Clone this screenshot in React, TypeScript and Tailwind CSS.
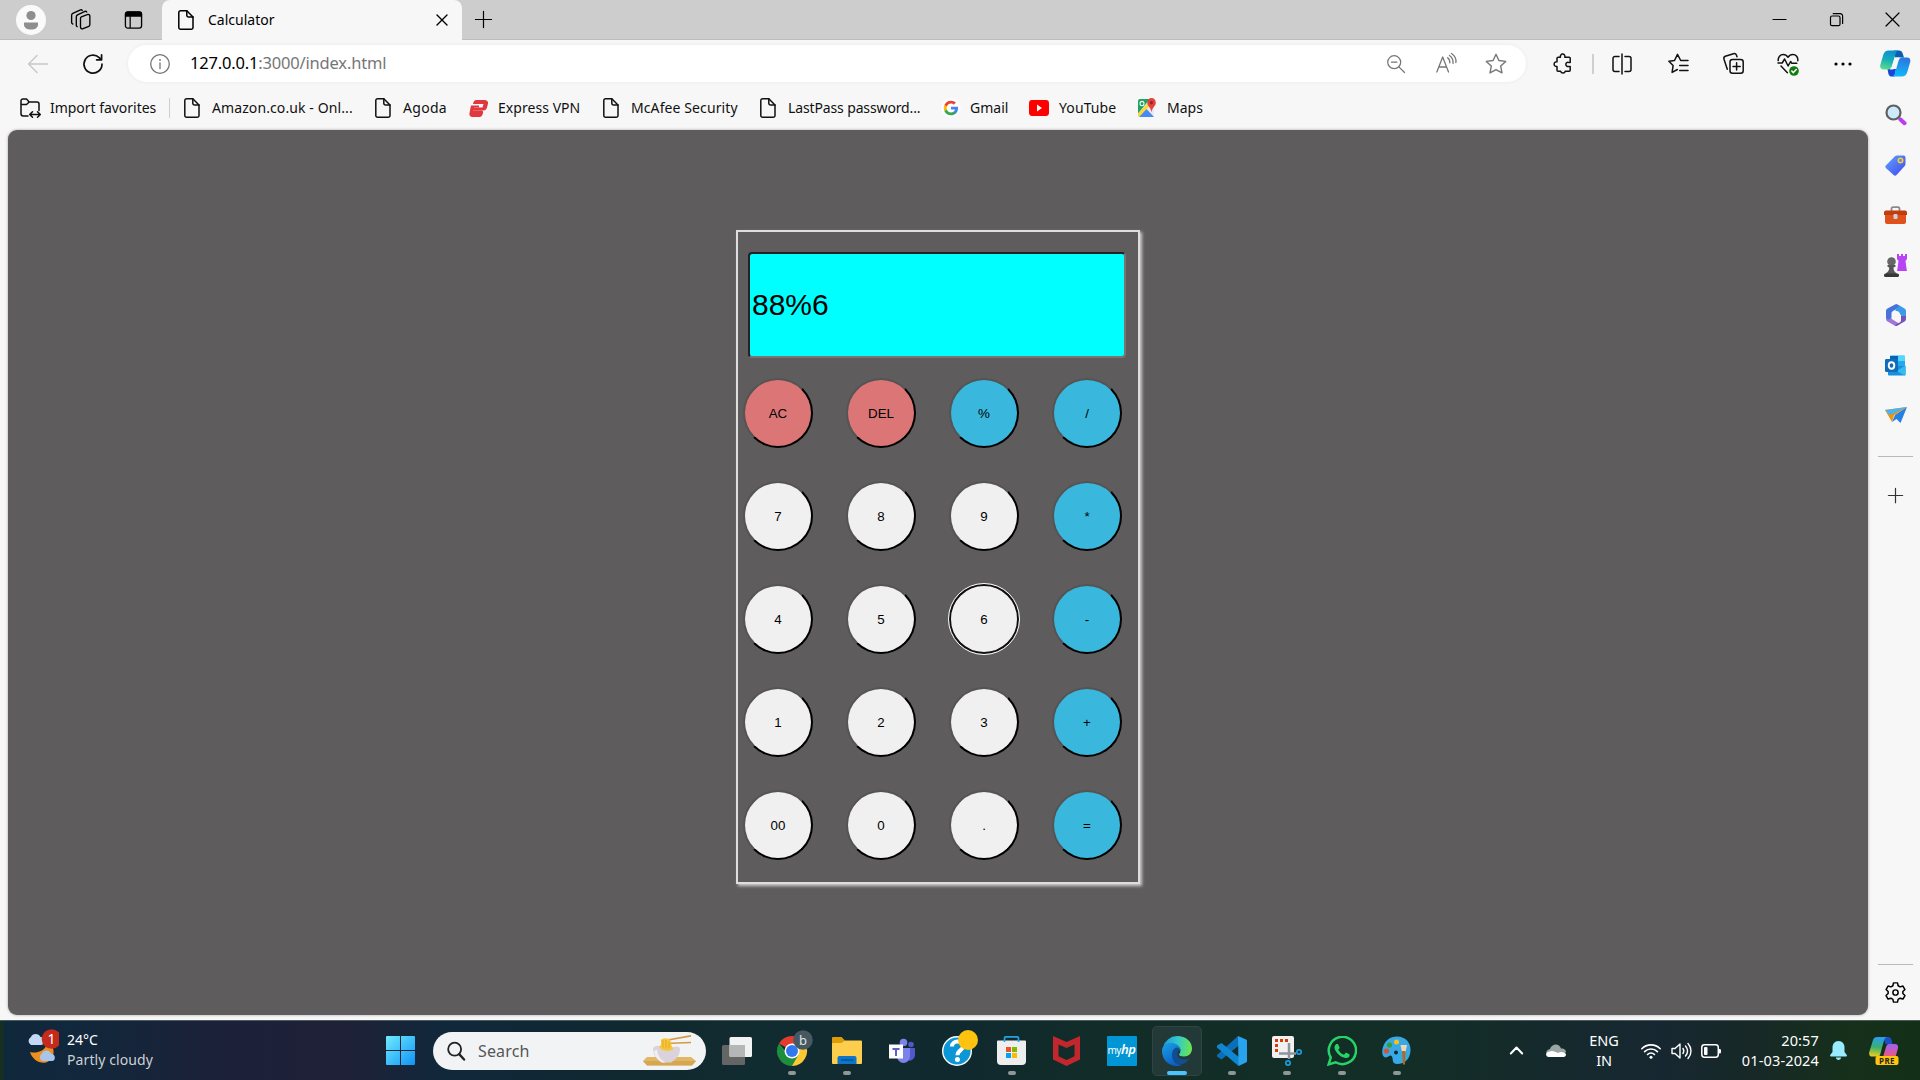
import React from "react";

const UI = "font-['Noto_Sans',sans-serif]";

type P = { children?: React.ReactNode; className?: string };

function Ico({ s = 20, vb = "0 0 20 20", w = 1.2, className = "", children }: { s?: number; vb?: string; w?: number } & P) {
  return (
    <svg width={s} height={s} viewBox={vb} fill="none" stroke="currentColor" strokeWidth={w} strokeLinecap="round" strokeLinejoin="round" className={"block shrink-0 overflow-visible " + className}>
      {children}
    </svg>
  );
}

const Doc = () => (
  <Ico s={20} w={1.5}>
    <path d="M4.6.8h6.2L17 7v10.400a1.800 1.800 0 0 1-1.800 1.800H4.600a1.800 1.800 0 0 1-1.800-1.800V2.600A1.800 1.800 0 0 1 4.600.8z" />
    <path d="M10.800.8v4.500A1.700 1.700 0 0 0 12.500 7H17" />
  </Ico>
);

const Plus = ({ s = 18, w = 1.4 }: { s?: number; w?: number }) => (
  <Ico s={s} w={w}><path d="M10 0.500v19M.5 10h19" /></Ico>
);

function Slot({ w, children }: { w: string; children?: React.ReactNode }) {
  return <div className={"flex h-full shrink-0 items-center justify-center " + w}>{children}</div>;
}

function TitleBar() {
  return (
    <div className="flex h-10 shrink-0 items-stretch border-b border-[#bdbdbd] bg-[#cdcdcd] text-black">
      <Slot w="w-[62px]">
        <svg width="30" height="30" viewBox="0 0 30 30">
          <circle cx="15" cy="15" r="15" fill="#fafafa" />
          <circle cx="15" cy="10.500" r="4.600" fill="#8e8e8e" />
          <path d="M8 17.600h14v1.800c0 3.400-3 5.100-7 5.100s-7-1.700-7-5.100z" fill="#8e8e8e" />
        </svg>
      </Slot>
      <Slot w="w-[36px]">
        <Ico s={21} w={1.400} vb="0 0 22 22">
          <path d="m12 8.200 6-2.300a1.800 1.800 0 0 1 2.800 1.500v9.100c0 .8-.4 1.300-1.100 1.600l-6 2.500a1.900 1.900 0 0 1-2.700-1.600V9.800c0-.8.300-1.300 1-1.600z" />
          <path d="M7.500 18.500c-.7-.3-.9-.8-.9-1.500V8.300c0-1 .4-1.700 1.300-2.200l7.700-3.600c.8-.3 1.600 0 1.900.7" />
          <path d="M3 15.800c-.8-.3-1.300-.8-1.300-1.700V6.500c0-.9.400-1.500 1.200-1.900L11 .9c.8-.3 1.500 0 1.900.7" />
        </Ico>
      </Slot>
      <Slot w="w-[70px]">
        <svg width="19" height="20" viewBox="0 0 20 20"><rect x="1.500" y="1.500" width="17" height="17" rx="2.500" fill="none" stroke="#000" strokeWidth="1.400" /><path d="M1 6.500V3.500A2.500 2.500 0 0 1 3.500 1h13A2.500 2.500 0 0 1 19 3.500v3z" /><path d="M6.500 6v12.500" stroke="#000" strokeWidth="1.300" /></svg>
      </Slot>
      <div className="-mb-px ml-[-6px] flex w-[300px] items-center rounded-t-[8px] bg-[#f7f7f7] pl-[14px]">
        <Doc />
        <span className="ml-[12px] w-[229px] text-[14px] leading-5">Calculator</span>
        <Ico s={10} vb="0 0 10 10" w={1.400}><path d="M0 0l10 10M10 0 0 10" /></Ico>
      </div>
      <Slot w="w-[43px]"><Plus s={17} /></Slot>
      <div className="grow" />
      <Slot w="w-[57px]"><Ico s={13} vb="0 0 13 13"><path d="M0 6.500h13" /></Ico></Slot>
      <Slot w="w-[57px]"><Ico s={13} vb="0 0 13 13"><rect x=".5" y="3" width="9.500" height="9.700" rx="1.500" /><path d="M3.200.6H10A2.500 2.500 0 0 1 12.600 3v7.400" /></Ico></Slot>
      <Slot w="w-[55px]"><Ico s={13} vb="0 0 13 13" w={1.200}><path d="M0 0l13 13M13 0 0 13" /></Ico></Slot>
    </div>
  );
}

function Toolbar() {
  return (
    <div className="flex h-[47px] shrink-0 items-center text-[#111]">
      <Slot w="w-[76px]"><Ico s={20} className="text-[#c8c8c8]" w={1.400}><path d="M19.500 10H.8M9 1.500.6 10 9 18.500" /></Ico></Slot>
      <Slot w="w-[34px]"><Ico s={20} w={1.700}><path d="M19 10.200A9 9 0 1 1 16.200 3.600L18.300 5.600M18.600.8v5h-5" /></Ico></Slot>
      <div className="ml-[18px] flex h-[37px] w-[1398px] shrink-0 items-center rounded-full bg-white pl-[22px] text-[#767676] shadow-[0_0_4px_rgba(0,0,0,0.06)]">
        <Ico s={20} w={1.300}><circle cx="10" cy="10" r="9.300" /><path d="M10 9v5.500" /><path d="M10 5.900v.1" strokeWidth="1.800" /></Ico>
        <span className="-mt-px ml-[20px] grow text-[16.500px] leading-6 tracking-[-0.18px]"><span className="text-black">127.0.0.1</span>:3000/index.html</span>
        <Slot w="w-[50px]"><Ico s={18} w={1.400}><circle cx="8" cy="8" r="7.200" /><path d="m13.200 13.200 6.300 6.300M5 8h6" /></Ico></Slot>
        <Slot w="w-[50px]"><Ico s={20} w={1.300}><path d="M.8 18 6.700 3 12.500 18M2.800 13h7.800M11.600 3.800c1.700 1.200 2.400 3 2.200 5M13.500 1.500c2.800 2 3.900 4.600 3.500 7.800M15.500-.5c3.400 2.200 4.900 5.300 4.400 9" /></Ico></Slot>
        <Slot w="w-[50px]"><Ico s={22} w={1.400} vb="0 0 22 22"><path d="m11 1.300 2.900 6.200 6.800.9-5 4.700 1.300 6.800-6-3.300-6 3.300 1.300-6.800-5-4.700 6.800-.9z" /></Ico></Slot>
        <div className="w-[5px] shrink-0" />
      </div>
      <div className="w-[11px] shrink-0" />
      <Slot w="w-[50px]"><Ico s={20} w={1.500}><path d="M6.200 3.200h2.300a2.300 2.300 0 1 1 4.300 0h4.400c.6 0 1 .4 1 1v4.200h-1.600a2.100 2.100 0 1 0 0 4h1.600v3.800c0 .6-.4 1-1 1h-3.900a2.400 2.400 0 0 1-4.700 0H6a1 1 0 0 1-1-1v-3.700a2.400 2.400 0 1 1 0-4.700V4.200c0-.6.400-1 1.200-1z" /></Ico></Slot>
      <div className="ml-[5px] h-[20px] w-[2px] shrink-0 bg-[#cfcfcf]" />
      <Slot w="w-[56px]"><Ico s={20} w={1.500}><path d="M10 0v20M7 2.500H3a2 2 0 0 0-2 2v11a2 2 0 0 0 2 2h4M13 2.500h4a2 2 0 0 1 2 2v11a2 2 0 0 1-2 2h-4" /></Ico></Slot>
      <Slot w="w-[56px]"><Ico s={21} w={1.500} vb="0 0 21 21"><path d="M12.700 7.500 9.500 1.400 6.500 7.500.9 8.300l4.200 4.300-1 6.800 5.300-2.900M12.700 7.500H20M11.700 12.500H20M11.700 17.500H20" /></Ico></Slot>
      <Slot w="w-[54px]"><Ico s={21} w={1.500} vb="0 0 21 21"><rect x="7" y="6.500" width="13.200" height="13.700" rx="2.500" /><path d="M13.600 9.700v7.300M10 13.400h7.200M4.300 16.200 1 6.200C.6 4.800 1 3.800 2.300 3.300L10.500.7c1.400-.4 2.400.1 2.900 1.300l.6 1.700" /></Ico></Slot>
      <Slot w="w-[55px]"><Ico s={22} w={1.500} vb="0 0 22 22"><path d="M1.200 7.600C1 4 3.300 1.500 6.200 1.500c2 0 3.600 1 4.800 2.800 1.200-1.800 2.800-2.800 4.800-2.800 3.200 0 5.400 2.600 5 6.200M1 10h4.200L7.600 6l3.500 7 2.500-4.500 1 1.700h5.200M4 13l6.400 6.700" /><circle cx="17" cy="18" r="4.800" fill="#107c10" stroke="none" /><path d="m14.800 18 1.600 1.600 2.900-3" stroke="#fff" /></Ico></Slot>
      <Slot w="w-[56px]"><svg width="18" height="4" viewBox="0 0 18 4"><circle cx="2" cy="2" r="1.600" /><circle cx="9" cy="2" r="1.600" /><circle cx="16" cy="2" r="1.600" /></svg></Slot>
      <Slot w="w-[49px]">
        <svg width="31" height="27" viewBox="0 0 31 27">
          <defs>
            <linearGradient id="cp1" x1=".5" y1="0" x2=".3" y2="1"><stop stopColor="#0c8fd2" /><stop offset=".5" stopColor="#17b0b8" /><stop offset="1" stopColor="#5ddc8c" /></linearGradient>
            <linearGradient id="cp2" x1=".6" y1="0" x2=".4" y2="1"><stop stopColor="#2c76dd" /><stop offset="1" stopColor="#10b9fb" /></linearGradient>
          </defs>
          <path d="M14 .5h5c2 0 3 .8 3.600 2.800L24 7.500h-9z" fill="#0b5fae" />
          <path d="M7.500 19H16l-1.500 7.500H12c-2 0-3-.8-3.600-2.800z" fill="#1746d8" />
          <path d="M9 .5h10c-1.700 0-2.700 1-3.300 3L12 16c-.7 2.300-1.700 3.500-4 3.500H3.500C.8 19.500-.4 17.500.3 15l2.900-10C4.200 1.800 6 .5 9 .5z" fill="url(#cp1)" />
          <path d="M21.500 26.500h-10c1.700 0 2.700-1 3.300-3L18.500 11c.7-2.300 1.700-3.500 4-3.500H27c2.700 0 3.900 2 3.200 4.500l-2.900 10c-1 3.200-2.800 4.500-5.800 4.500z" fill="url(#cp2)" />
          <path d="M14.800 7.500h5c-1.500.8-2.300 2-2.800 3.600l-1.900 6.500c-.4 1.200-1.200 1.900-2.700 1.900H9.500c1.300-.6 2.100-1.800 2.500-3.200z" fill="#f7f7f7" />
        </svg>
      </Slot>
    </div>
  );
}

const G = () => (
  <svg width="20" height="20" viewBox="-3 -3 30 30"><circle cx="12" cy="12" r="14.500" fill="#fff" />
    <path fill="#4285F4" d="M22.560 12.250c0-.78-.07-1.530-.2-2.250H12v4.260h5.920c-.26 1.370-1.040 2.530-2.210 3.310v2.770h3.570c2.080-1.920 3.280-4.740 3.280-8.090z" />
    <path fill="#34A853" d="M12 23c2.970 0 5.460-.98 7.280-2.660l-3.570-2.770c-.98.66-2.230 1.060-3.710 1.060-2.860 0-5.290-1.930-6.160-4.530H2.180v2.840C3.990 20.530 7.700 23 12 23z" />
    <path fill="#FBBC05" d="M5.840 14.090A6.600 6.600 0 0 1 5.490 12c0-.73.13-1.430.35-2.090V7.070H2.180a11 11 0 0 0 0 9.860z" />
    <path fill="#EA4335" d="M12 5.380c1.620 0 3.060.56 4.210 1.640l3.150-3.150C17.450 2.090 14.970 1 12 1 7.700 1 3.990 3.470 2.180 7.070l3.660 2.840C6.710 7.310 9.140 5.380 12 5.380z" />
  </svg>
);

function Fav({ w, icon, children, className = "" }: { w: string; icon: React.ReactNode } & P) {
  return (
    <div className={"flex h-full shrink-0 items-center gap-[10px] " + w}>
      <div className="flex w-5 shrink-0 justify-center">{icon}</div>
      <span className={"whitespace-nowrap text-[14px] leading-5 " + className}>{children}</span>
    </div>
  );
}

function Favorites() {
  return (
    <div className="flex h-[43px] shrink-0 items-center pb-px pl-5 text-[#111]">
      <Fav w="w-[149px]" className="tracking-[-0.03px]" icon={<Ico s={20} w={1.500}><path d="M8 18H3.200A2.200 2.200 0 0 1 1 15.800V2.900A1.900 1.900 0 0 1 2.900 1H6.500l2.700 3H17a2 2 0 0 1 2 2v6.500M1 6.500h5.500L9.200 4M10.200 16.500H20M12.500 13.700l-2.800 2.800 2.800 2.800M17.500 13.700l2.800 2.800-2.800 2.800" /></Ico>}>Import favorites</Fav>
      <div className="h-5 w-px shrink-0 bg-[#cfcfcf]" />
      <div className="w-3 shrink-0" />
      <Fav w="w-[191px]" icon={<Doc />} className="tracking-[0.1px]">Amazon.co.uk - Onl...</Fav>
      <Fav w="w-[95px]" icon={<Doc />} className="tracking-[0.3px]">Agoda</Fav>
      <Fav w="w-[133px]" className="tracking-[0.05px]" icon={<svg width="19" height="17" viewBox="0 0 19 17"><path d="M7.500 0h8c2.800 0 4 1.800 3.400 4l-.9 3.500c-.6 2-1.500 3-3.500 3H4.500C3 10.500 2.400 9.600 2.700 8.500L3 7.500h10.500l1-3.500H4C4.500 1.500 5.500 0 7.500 0z" fill="#e0383e" /><path d="M2 5.500h8v2H5L4 10.500h8c1.500 0 2.500.8 2 2.500-.6 2.500-1.700 4-3.500 4h-7C1 17 0 15.200.5 13z" fill="#e0383e" /></svg>}>Express VPN</Fav>
      <Fav w="w-[157px]" icon={<Doc />} className="tracking-[0.1px]">McAfee Security</Fav>
      <Fav w="w-[183px]" icon={<Doc />} className="tracking-[-0.13px]">LastPass password...</Fav>
      <Fav w="w-[88px]" icon={<G />} className="-ml-px">Gmail</Fav>
      <Fav w="w-[108px]" className="tracking-[0.1px]" icon={<svg width="20" height="16" viewBox="0 0 20 14" preserveAspectRatio="none"><rect width="20" height="14" rx="3" fill="#f00" /><path d="M8 4v6l5-3z" fill="#fff" /></svg>}>YouTube</Fav>
      <Fav w="w-[80px]" icon={
        <svg width="18" height="20" viewBox="0 0 18 18" preserveAspectRatio="none"><rect y="1" width="16" height="16" rx="2" fill="#e8eaed" /><path d="M2 1h10L0 14V3a2 2 0 0 1 2-2z" fill="#1ea362" /><path d="M8 9.500 16 17H1z" fill="#4a89f3" /><path d="M14 1 0 14v2l1 1L16 3z" fill="#fdd835" /><circle cx="4" cy="5" r="2" fill="none" stroke="#fff" /><path d="M13.500 0A4.200 4.200 0 0 0 9.300 4.200C9.300 7.500 13 8 13.500 13c.5-5 4.300-5.500 4.300-8.800A4.200 4.200 0 0 0 13.500 0z" fill="#e5433a" /><circle cx="13.500" cy="4.300" r="1.600" fill="#8a2b23" /></svg>
      }>Maps</Fav>
    </div>
  );
}

const keys = ["AC", "DEL", "%", "/", "7", "8", "9", "*", "4", "5", "6", "-", "1", "2", "3", "+", "00", "0", ".", "="];

function keyColor(k: string, i: number) {
  if (k === "AC" || k === "DEL") return "bg-[#dc7676] ";
  return i % 4 === 3 || k === "%" ? "bg-[#39b7dc] " : "bg-[#f0f0f0] ";
}

function Calculator() {
  return (
    <div className="flex h-[654px] w-[404px] flex-col border-2 border-[#dedede] pt-5 font-['Liberation_Sans',Arial,sans-serif] text-black shadow-[2px_2px_3px_#ffffffb0]">
      <div className="ml-[10px] flex h-[106px] w-[378px] shrink-0 items-center rounded-[4px] border-2 border-b-[#767676] border-l-[#222] border-r-[#767676] border-t-[#222] bg-[#00ffff] pb-[2px] pl-[2px] text-[30px]">88%6</div>
      <div className="ml-[5px] mt-5 grid grid-cols-[repeat(4,70px)] gap-[33px]">
        {keys.map((k, i) => (
          <button key={k} className={"flex h-[70px] w-[70px] items-center justify-center rounded-full border-2 pt-px text-[13.330px] " + keyColor(k, i) + (k === "6" ? "border-[#101010] outline outline-[1.250px] outline-white" : "border-b-black border-l-[#555354] border-r-black border-t-[#555354]")}>{k}</button>
        ))}
      </div>
    </div>
  );
}

function SideIcons() {
  const cell = "flex h-[50px] shrink-0 items-center justify-center";
  return (
    <div className="flex w-[52px] shrink-0 flex-col items-center pl-[3px] pt-[3px] text-[#333]">
      <div className={cell}>
        <svg width="22" height="22" viewBox="0 0 22 22"><path d="m14 14 6.500 6" stroke="#666" strokeWidth="2.500" /><path d="m15.500 15.500 4 3.700" stroke="#c03af5" strokeWidth="4" strokeLinecap="round" /><circle cx="8.500" cy="8.500" r="7" fill="#cdeafb" stroke="#606060" strokeWidth="2.200" /></svg>
      </div>
      <div className={cell}>
        <svg width="21" height="21" viewBox="0 0 21 21"><defs><linearGradient id="tg" x1="0" y1="0" x2="1" y2="1"><stop stopColor="#5fa4fb" /><stop offset="1" stopColor="#4246ee" /></linearGradient></defs><path d="M12 .5h6.500A2 2 0 0 1 20.500 2.500V9a3 3 0 0 1-.8 2l-8.200 9a2 2 0 0 1-2.900 0l-7.500-6.800a2 2 0 0 1 0-2.900L9.900 1.300A3 3 0 0 1 12 .5z" fill="url(#tg)" /><circle cx="15.500" cy="5.500" r="2.200" fill="#5b85f2" stroke="#f6cf38" strokeWidth="1.600" /></svg>
      </div>
      <div className={cell}>
        <svg width="23" height="18" viewBox="0 0 23 18"><path d="M7.500 5V2.800A1.500 1.500 0 0 1 9 1.200h5a1.500 1.500 0 0 1 1.500 1.600V5" fill="none" stroke="#8a8a8a" strokeWidth="1.800" /><rect x="1" y="6" width="21" height="12" rx="2" fill="#df521c" /><path d="M2 4.500h19a2 2 0 0 1 2 2V9H0V6.500a2 2 0 0 1 2-2z" fill="#c13d0d" /><rect x="9.500" y="8" width="4" height="5" rx="1" fill="#c9d3d8" /></svg>
      </div>
      <div className={cell}>
        <svg width="23" height="23" viewBox="0 0 23 23"><path d="M13 0h2v2h2V0h2v2h2V0h2v5l-1.500 2 1 7.500.5 2.500H13l.5-2.500 1-7.500L13 5z" fill="#b944f5" /><circle cx="7.500" cy="7.500" r="4.300" fill="#666" /><path d="M3.500 11h8v1.800l-2 .7c0 3 1 4.500 3 5.500v1H2v-1c2-1 3.200-2.500 3.200-5.500l-1.700-.7z" fill="#575757" /><rect y="19.500" width="15" height="3.500" rx="1.500" fill="#383838" /></svg>
      </div>
      <div className={cell}>
        <svg width="22" height="22" viewBox="0 0 22 22"><path d="M10 .4 2.500 4.500A3 3 0 0 0 1 7.200v6.800c0 1.500 1 2.500 2.300 2.500S6.500 15 6.500 13V9.500c0-1.200.6-2 1.500-2.600L14.500 3V1.500L12.500.4a3 3 0 0 0-2.500 0z" fill="#4573db" /><path d="M1 13v1.800a3 3 0 0 0 1.500 2.700l7 4c1 .6 2 .6 3 0l2.500-1.500-7.500-4.500c-1-.6-1.300-1.200-1.500-2.500-.3 3-4.500 3.500-5 0z" fill="#a276d8" /><path d="M21 10v4.800a3 3 0 0 1-1.500 2.700l-7 4a3 3 0 0 1-3 0l5.500-3.300c.6-.4 1-1 1-2V11c2.500 1.500 4.500 1 5-1z" fill="#7650b5" /><path d="M14.500 1.500 19.500 4.500A3 3 0 0 1 21 7.200V10c0 2-2.500 2.700-4.500 1.500L10 6z" fill="#3a9aea" /><circle cx="11" cy="11" r="4" fill="#f7f7f7" /></svg>
      </div>
      <div className={cell}>
        <svg width="21" height="21" viewBox="0 0 21 21"><rect x="5" y=".5" width="15" height="13" rx="1" fill="#28a8ea" /><path d="M5 1h8v5H5z" fill="#0364b8" /><path d="M13 1h7v5h-7z" fill="#50d9ff" /><path d="M3 11h17.500v8.500a1 1 0 0 1-1 1H4a1 1 0 0 1-1-1z" fill="#1490df" /><path d="m20.500 10.500-9 5.500 8 4.500a1 1 0 0 0 1-1z" fill="#35bbef" /><rect y="4" width="13" height="13" rx="1.200" fill="#0f6cbd" /><ellipse cx="6.500" cy="10.500" rx="2.800" ry="3.300" fill="none" stroke="#fff" strokeWidth="1.900" /></svg>
      </div>
      <div className={cell}>
        <svg width="22" height="16" viewBox="0 0 22 16"><path d="M0 3 22 0 9 8.500 7 15z" fill="#f0930d" /><path d="M0 3 22 0 5 8z" fill="#47b4f5" /><path d="M22 0 15.500 16 11.500 12 7 15 10 8z" fill="#2580e5" /></svg>
      </div>
      <div className="mt-[16px] h-px w-[35px] shrink-0 bg-[#b9b9b9]" />
      <div className="mt-[31px] shrink-0"><Plus s={15} w={1.600} /></div>
      <div className="grow" />
      <div className="h-px w-[35px] shrink-0 bg-[#b9b9b9]" />
      <div className="mb-[17px] mt-[17px] shrink-0 text-black">
        <Ico s={21} w={1.700} vb="0 0 24 24"><path d="M9.700 1h4.600l.7 3.300 2.300 1.300 3.200-1 2.300 4-2.400 2.300v2.300l2.400 2.300-2.300 4-3.200-1-2.300 1.300-.7 3.200H9.700L9 19.800l-2.300-1.300-3.200 1-2.300-4 2.400-2.300v-2.300L1.200 8.600l2.300-4 3.200 1L9 4.300z" /><circle cx="12" cy="12" r="3" /></Ico>
      </div>
    </div>
  );
}

function TaskIcon({ children, dot = false, active = false }: { children: React.ReactNode; dot?: boolean; active?: boolean }) {
  return (
    <div className="flex h-full w-[55px] shrink-0 items-center justify-center">
      <div className={"relative flex h-[50px] w-[50px] items-center justify-center rounded-[5px] " + (active ? "border border-[#2f4543] bg-[#233937]" : "")}>
        {children}
        {dot && <span className="absolute bottom-[1px] left-[21px] h-1 w-2 rounded-full bg-[#8d9897]" />}
        {active && <span className="absolute bottom-0 left-[14px] h-1 w-5 rounded-full bg-[#4cc2ff]" />}
      </div>
    </div>
  );
}

function Taskbar() {
  return (
    <div className="flex h-[60px] shrink-0 items-center border-t border-[#4a5c5c] bg-[linear-gradient(90deg,#152f20_0px,#152f20_3px,#10283c_4px,#12273b_90px,#1b2139_210px,#1f2138_340px,#10283a_450px,#10282f_640px,#112c31_760px,#10292f_960px,#122d27_1130px,#132e26_1400px,#152a2c_1540px,#172731_1660px,#172827_1750px,#16301b_1850px,#142f18_1920px)] text-white">
      <div className="ml-[27px] flex w-[359px] shrink-0 items-center gap-[8px]">
        <svg width="32" height="36" viewBox="0 0 32 36" className="-mt-[10px]"><path d="M3 24c6 2 15-1 17-8 9 1 9 15-1 18.500C12 36 5 31 3 24z" fill="#ef8f1d" /><path d="M4 17a4.500 4.500 0 0 1 0-8c1-4 8-4 9.500 0C18 9 18 17 14 17z" fill="#c3d8f7" /><path d="M15 33a4.300 4.300 0 0 1 0-7.500c1-4 7.500-4 9 0 5 .5 5 7.500 1 7.500z" fill="#a9c5ee" /><circle cx="24.500" cy="11" r="9.800" fill="#c42b1c" /><text x="24.500" y="16" textAnchor="middle" fontSize="14" fill="#fff" fontFamily="Noto Sans">1</text></svg>
        <div className="-mt-[2px] text-[14px] leading-5"><div>24°C</div><div className="tracking-[0.1px] text-[#cdd0d5]">Partly cloudy</div></div>
      </div>
      <svg width="29" height="29" viewBox="0 0 29 29" className="shrink-0"><defs><linearGradient id="wn" x1="0" y1="0" x2="1" y2="1"><stop stopColor="#6febff" /><stop offset="1" stopColor="#0f93f5" /></linearGradient></defs><path d="M1 0h13v14H0V1a1 1 0 0 1 1-1zM15 0h13a1 1 0 0 1 1 1v13H15zM0 15h14v14H1a1 1 0 0 1-1-1zM15 15h14v13a1 1 0 0 1-1 1H15z" fill="url(#wn)" /></svg>
      <div className="ml-[18px] flex h-[38px] w-[273px] shrink-0 items-center rounded-full bg-[#f1f3f5] pl-[14px] pr-[10px]">
        <Ico s={18} w={2} className="text-[#222]"><circle cx="8.500" cy="8" r="7.200" /><path d="m13.500 13.500 5.500 6" strokeWidth="2.600" /></Ico>
        <span className="ml-[13px] grow text-[16px] tracking-[0.15px] text-[#565656]">Search</span>
        <svg width="53" height="31" viewBox="0 0 53 31"><path d="M4 22h44l5 4-4 4.500H4L0 26z" fill="#e0b765" /><path d="M0 26h53l-4 4.500H4z" fill="#cd9c45" opacity=".6" /><path d="M22 5.500 48 .8M22 8.500l26-1" stroke="#d39a45" strokeWidth="1.700" /><path d="M15 15c0-3 2-4 3-5V5c2-2.500 8-2 9.500.5 1 2 1 7 2.500 9.500z" fill="#f7c63b" /><path d="M20 5v10M23 5v10M26 7v7" stroke="#d89c20" strokeWidth=".7" /><path d="M10 13c2-2.500 5-3 7-1.500 3 3 10 4 13 .5 3-1 7-1 7 2 0 7-5 11-9 13.500h-9C14 25 10 20 10 13z" fill="#dbd3dc" /><path d="M11 16c1 6 4 9 8 11.500h4c-5-2-8-6-9-13z" fill="#f3eef3" /><path d="M17 11c2 4 9 5 13 2" stroke="#f7c63b" strokeWidth="2.500" fill="none" /></svg>
      </div>
      <div className="ml-[3px] flex h-full shrink-0">
        <TaskIcon><svg width="30" height="28" viewBox="0 0 30 28"><rect y="8" width="23" height="20" rx="1.500" fill="#646666" /><rect x="7.500" width="22.500" height="20" rx="1.500" fill="#f2f2f2" /><path d="M7.500 8H23v12H9a1.500 1.500 0 0 1-1.500-1.500z" fill="#b5b7b7" /></svg></TaskIcon>
        <TaskIcon dot>
          <svg width="30" height="30" viewBox="0 0 30 30" className="overflow-visible"><path d="M15 15 2 7.500A15 15 0 0 1 28 7.500H15z" fill="#e33b2e" /><path d="M15 15v15A15 15 0 0 0 28 7.500H15z" fill="#fcc934" /><path d="M2 7.500A15 15 0 0 0 15 30l6.500-11.200L15 15H8.500z" fill="#1e8e3e" /><circle cx="15" cy="15" r="7.500" fill="#fff" /><circle cx="15" cy="15" r="6" fill="#3178ee" /><circle cx="26" cy="4" r="9.800" fill="#475862" /><text x="26" y="9" textAnchor="middle" fontSize="13" fill="#dfe3e5" fontFamily="Noto Sans">b</text></svg>
        </TaskIcon>
        <TaskIcon dot><svg width="30" height="27" viewBox="0 0 30 27"><path d="M1 0h8.500l3.500 3.500V8H0V1a1 1 0 0 1 1-1z" fill="#dd9b0a" /><path d="M1 6h8.500L13 3.500h16a1 1 0 0 1 1 1V26a1 1 0 0 1-1 1H1a1 1 0 0 1-1-1V7a1 1 0 0 1 1-1z" fill="#fdce4b" /><path d="M5.500 27v-6A2 2 0 0 1 7.500 19h15a2 2 0 0 1 2 2v6z" fill="#0d76c8" /><path d="M9 23h12.500" stroke="#084f93" strokeWidth="1.500" /></svg></TaskIcon>
        <TaskIcon><svg width="26" height="26" viewBox="0 0 26 26"><circle cx="22" cy="6.500" r="2.800" fill="#5059c9" /><circle cx="14.500" cy="4.500" r="3.800" fill="#7b83eb" /><path d="M18 10h8v8a5.500 5.500 0 0 1-8 4z" fill="#5059c9" /><path d="M8 10h13v8.500A6.500 6.500 0 0 1 8 18.500z" fill="#7b83eb" /><rect y="6.500" width="14" height="14" fill="#fff" /><path d="M7 18v-7M3.500 11h7" stroke="#5a62c3" strokeWidth="2" /></svg></TaskIcon>
        <TaskIcon><svg width="30" height="30" viewBox="0 0 30 30" className="overflow-visible"><circle cx="15" cy="15" r="14.300" fill="#0c96d6" stroke="#fff" strokeWidth="1.400" /><path d="M10 10.500c0-6.500 11-6.500 11-.3 0 4.500-5.500 4-5.500 9" stroke="#fff" strokeWidth="4" fill="none" /><circle cx="15.400" cy="23.500" r="2.500" fill="#fff" /><circle cx="26" cy="4" r="10" fill="#ffc20e" /></svg></TaskIcon>
        <TaskIcon dot><svg width="29" height="29" viewBox="0 0 29 29"><path d="M1 4.500h27a1 1 0 0 1 1 1V25a4 4 0 0 1-4 4H4a4 4 0 0 1-4-4V5.500a1 1 0 0 1 1-1z" fill="#eeeeee" /><path d="M7.500 6V2a1.500 1.500 0 0 1 1.500-1.200h11A1.500 1.500 0 0 1 21.500 2v4" stroke="#1fa4e4" strokeWidth="1.700" fill="none" /><path d="M9 11h5v5H9z" fill="#f25022" /><path d="M15 11h5v5h-5z" fill="#7fba00" /><path d="M9 17h5v5H9z" fill="#00a4ef" /><path d="M15 17h5v5h-5z" fill="#ffb900" /></svg></TaskIcon>
        <TaskIcon><svg width="27" height="30" viewBox="0 0 27 30"><path fillRule="evenodd" d="m0 0 13.500 6L27 0v23.500L13.500 30 0 23.500zM5.500 8.500v11.800l8 3.700 8-3.700V8.500l-8 3.500z" fill="#c1272d" /></svg></TaskIcon>
        <TaskIcon><div className="flex h-[30px] w-[30px] items-center justify-center rounded-[1px] bg-[#0096d6] pb-[2px] text-[10px] leading-none tracking-[-0.4px]">my<b className="text-[13px] font-semibold italic">hp</b></div></TaskIcon>
        <TaskIcon active>
          <svg width="30" height="30" viewBox="0 0 30 30"><defs><linearGradient id="e1" x1="0" y1=".4" x2="1" y2=".5"><stop stopColor="#1b9de0" /><stop offset=".5" stopColor="#35c9c9" /><stop offset="1" stopColor="#6ae64c" /></linearGradient><linearGradient id="e2" x1="0" y1="0" x2=".5" y2="1"><stop stopColor="#1ba1e4" /><stop offset="1" stopColor="#0b5fc4" /></linearGradient></defs><path d="M1 11A15 15 0 0 1 15 0c9 0 15 5.500 15 12.500 0 5-3.500 8-8 8-3.500 0-5-1-5-2 0-.8 1.500-1.500 1.500-4C18.500 10.500 14 7.500 9 7.500c-4 0-7 1.500-8 3.500z" fill="url(#e1)" /><path d="M0 15C0 9.500 4.500 7 9 7c5.500 0 9.500 3.500 9.500 7.500-3-2.500-7.500 0-7.500 5 0 5 4 9.500 8.500 9.500-1.500.7-3 1-4.500 1C6.500 30 0 23.500 0 15z" fill="url(#e2)" /><path d="M15 11.500c-3 .5-5 3.500-5 7.500 0 6 4 10 9 10 4.500-1.500 8-5 8.500-6.500-3 1.700-12 1.500-12-4.500 0-2 .8-3 1.500-3.500 1 0 1.500-2-2-3z" fill="#114d8f" /></svg>
        </TaskIcon>
        <TaskIcon dot><svg width="30" height="30" viewBox="0 0 30 30"><path d="M21 0 23 8.500 4.500 23.500 0 20.500V19z" fill="#0b6fb8" /><path d="m4.500 7 18.500 15L21.500 30 0 11.500V9.500z" fill="#1186d0" /><path d="m21 0 8 3.500A1.500 1.500 0 0 1 30 5v20a1.500 1.500 0 0 1-1 1.500L21.500 30z" fill="#2aa3ee" /></svg></TaskIcon>
        <TaskIcon dot><svg width="30" height="30" viewBox="0 0 30 30" className="overflow-visible"><rect width="22" height="22" rx="2" fill="#f2f0f0" /><path d="M4.500 16V4.500H17" stroke="#d83b01" strokeWidth="3" strokeDasharray="3 2" fill="none" /><path d="M17 7v16M7 17.500h17" stroke="#8d969c" strokeWidth="2.500" /><circle cx="27" cy="16" r="2.200" fill="none" stroke="#1c9ae0" strokeWidth="1.700" /><circle cx="16" cy="27" r="2.200" fill="none" stroke="#1c9ae0" strokeWidth="1.700" /></svg></TaskIcon>
        <TaskIcon dot><svg width="30" height="30" viewBox="0 0 24 24"><path fill="#25d366" d="M17.472 14.382c-.297-.149-1.758-.867-2.030-.967-.273-.099-.471-.148-.670.150-.197.297-.767.966-.940 1.164-.173.199-.347.223-.644.075-.297-.150-1.255-.463-2.390-1.475-.883-.788-1.480-1.761-1.653-2.059-.173-.297-.018-.458.130-.606.134-.133.298-.347.446-.520.149-.174.198-.298.298-.497.099-.198.050-.371-.025-.520-.075-.149-.669-1.612-.916-2.207-.242-.579-.487-.500-.669-.510-.173-.008-.371-.010-.570-.010-.198 0-.520.074-.792.372-.272.297-1.040 1.016-1.040 2.479 0 1.462 1.065 2.875 1.213 3.074.149.198 2.096 3.200 5.077 4.487.709.306 1.262.489 1.694.625.712.227 1.360.195 1.871.118.571-.085 1.758-.719 2.006-1.413.248-.694.248-1.289.173-1.413-.074-.124-.272-.198-.570-.347" /><path d="M1.300 22.700 3 17.200A10.900 10.900 0 1 1 6.900 21z" fill="none" stroke="#25d366" strokeWidth="2" /></svg></TaskIcon>
        <TaskIcon dot><svg width="29" height="29" viewBox="0 0 29 29"><path d="M15 .5C24 .5 29 7 28.500 15c-.5 8-6 13-13 13-6 0-4-4.500-5.500-7.500-2-2.500-3.500 1-6 1C0 21.500 0 16 .5 13 2 5 8 .5 15 .5z" fill="#37a9e6" /><circle cx="14.500" cy="6" r="2.500" fill="#fcbf16" /><circle cx="7.500" cy="9" r="2.600" fill="#3c9a2f" /><circle cx="4.500" cy="15" r="2.600" fill="#d9532c" /><circle cx="14" cy="16.500" r="2" fill="#122d27" /><path d="M18.500 9h6.500l-1.500 7h-3.500z" fill="#f1d7b8" /><path d="M20 15h3.500L23 28.500h-2z" fill="#b26b1c" /></svg></TaskIcon>
      </div>
      <div className="grow" />
      <Slot w="w-[40px]"><Ico s={13} vb="0 0 13 13" w={2}><path d="M.8 9.500 6.500 3.500l5.700 6" /></Ico></Slot>
      <Slot w="w-[40px]"><svg width="20" height="13" viewBox="0 0 20 13"><path d="M2 12.500C-1 10 0 5.500 4 5c1.500-5 9-6.500 11-.5 4 0 5 2 5 4z" fill="#9ba5a4" /><path d="M3 13c-4 0-3.500-5 0-5.200C6 6 9 7.500 12 9c3-2 7.500-1 8 1.500 0 1.500-1 2.500-2.500 2.500z" fill="#fff" /></svg></Slot>
      <div className="-mt-px w-[56px] shrink-0 text-center text-[14.500px] leading-5 tracking-[-0.1px]">ENG<br />IN</div>
      <Slot w="w-[38px]"><Ico s={20} w={1.600}><path d="M.8 7.700a13 13 0 0 1 18.400 0M3.600 10.600a9 9 0 0 1 12.800 0M6.500 13.500a5 5 0 0 1 7 0" /><circle cx="10" cy="16.200" r="1.500" fill="currentColor" stroke="none" /></Ico></Slot>
      <Slot w="w-[22px]"><Ico s={20} w={1.400}><path d="M1 7.500h3L9 3v14l-5-4.500H1zM12 7.500c1 1.500 1 3.500 0 5M14.500 5c2.500 3 2.500 7 0 10M17 2.500c4 4.500 4 10.500 0 15" /></Ico></Slot>
      <Slot w="w-[38px]"><svg width="20" height="14" viewBox="0 0 20 14"><rect x=".8" y=".8" width="16.500" height="12.400" rx="2.600" fill="none" stroke="#fff" strokeWidth="1.500" /><rect x="3" y="3" width="3.500" height="8" rx="1" fill="#fff" /><path d="M18 5h1.200l.8 1v2.500l-.8 1H18z" fill="#fff" /></svg></Slot>
      <div className="-mt-[2px] w-[89px] shrink-0 text-right text-[14.500px] leading-5 tracking-[0.15px]">20:57<br />01-03-2024</div>
      <Slot w="w-[38px]"><svg width="17" height="19" viewBox="0 0 17 19"><path d="M8.500 0c4 0 6 3 6 6.500V11l2.300 3c.4.800 0 1.500-.8 1.500H1c-.8 0-1.200-.7-.8-1.500l2.300-3V6.500C2.500 3 4.500 0 8.500 0zM5.800 16.500h5.400c-.4 1.600-1.300 2.500-2.700 2.500s-2.300-.9-2.700-2.500z" fill="#99ebff" /></svg></Slot>
      <div className="ml-[12px] w-[51px] shrink-0">
        <svg width="30" height="28" viewBox="0 0 30 28"><defs><linearGradient id="q1" x1=".3" y1="0" x2=".2" y2="1"><stop stopColor="#2b9df0" /><stop offset=".5" stopColor="#38b070" /><stop offset="1" stopColor="#f2ce20" /></linearGradient><linearGradient id="q2" x1=".5" y1="0" x2=".5" y2="1"><stop stopColor="#9a62f5" /><stop offset="1" stopColor="#f5557b" /></linearGradient></defs><path d="M14 0h5c2 0 3 1 3.500 3l1 4h-7z" fill="#1c4fc5" /><path d="M8 0h10c-2 .5-2.500 2-3 3.500L11 18c-.5 1.500-1.500 1.500-3 1.500H3C.8 19.500-.4 17.500.3 15L4 3c.7-2 2-3 4-3z" fill="url(#q1)" /><path d="M20 7h6c2 0 3.500 1.500 3 4l-2.500 9H14l3-10c.6-2 1.500-3 3-3z" fill="url(#q2)" /><rect x="6.500" y="19" width="23" height="9" rx="2" fill="#ffc60c" /><text x="18" y="26.500" textAnchor="middle" fontSize="8" fontWeight="700" letterSpacing=".4" fill="#222" fontFamily="Noto Sans">PRE</text></svg>
      </div>
    </div>
  );
}

export default function App() {
  return (
    <div className={"flex h-[1080px] w-[1920px] flex-col overflow-hidden bg-[#f7f7f7] " + UI}>
      <TitleBar />
      <Toolbar />
      <div className="flex min-h-0 grow">
        <div className="flex min-w-0 grow flex-col">
          <Favorites />
          <div className="mb-[5px] ml-2 flex grow justify-center rounded-[9px] bg-[#5f5c5d] pt-[100px] shadow-[0_0_3px_rgba(0,0,0,0.35)]">
            <Calculator />
          </div>
        </div>
        <SideIcons />
      </div>
      <Taskbar />
    </div>
  );
}
